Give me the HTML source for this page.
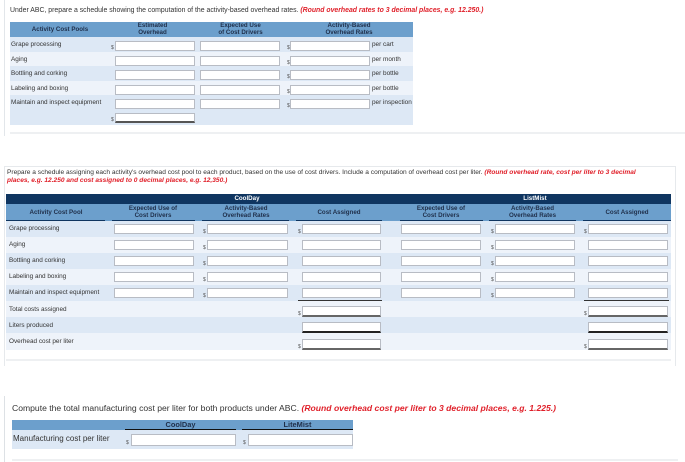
<!DOCTYPE html><html><head><style>
body{margin:0;width:685px;height:462px;background:#fff;font-family:"Liberation Sans",sans-serif;position:relative;overflow:hidden;color:#333}
div,span{position:absolute;box-sizing:border-box}
.t{font-size:6.4px;white-space:nowrap}
.r{color:#e0202a;font-style:italic;font-weight:bold}
.in{background:#fff;border:1px solid #b8bcc4;height:10px}
.hd{font-size:6.2px;font-weight:bold;color:#1f2f4a;text-align:center;line-height:6.5px}
.d{font-size:5px;color:#555}
.ul{height:1px;background:#0f3560}
</style></head><body>
<div style="left:4px;top:0;width:681px;height:136px;border-left:1px solid #e2e6ea"></div>
<div class="t" style="left:10px;top:7px;font-size:6.9px">Under ABC, prepare a schedule showing the computation of the activity-based overhead rates. <span class="r" style="position:static">(Round overhead rates to 3 decimal places, e.g. 12.250.)</span></div>
<div style="left:10px;top:22px;width:403px;height:15px;background:#6c9fcc"></div>
<div class="hd" style="left:10px;top:27px;width:100px">Activity Cost Pools</div>
<div class="hd" style="left:110px;top:23px;width:85px">Estimated<br>Overhead</div>
<div class="hd" style="left:198px;top:23px;width:85px">Expected Use<br>of Cost Drivers</div>
<div class="hd" style="left:285px;top:23px;width:128px">Activity-Based<br>Overhead Rates</div>
<div style="left:10px;top:37px;width:403px;height:15px;background:#dde8f5"></div>
<div style="left:10px;top:52px;width:403px;height:14px;background:#eef3fa"></div>
<div style="left:10px;top:66px;width:403px;height:15px;background:#dde8f5"></div>
<div style="left:10px;top:81px;width:403px;height:14px;background:#eef3fa"></div>
<div style="left:10px;top:95px;width:403px;height:30px;background:#dde8f5"></div>
<div class="t" style="left:11px;top:41px">Grape processing</div>
<div class="t" style="left:11px;top:56px">Aging</div>
<div class="t" style="left:11px;top:70px">Bottling and corking</div>
<div class="t" style="left:11px;top:85px">Labeling and boxing</div>
<div class="t" style="left:11px;top:99px">Maintain and inspect equipment</div>
<div class="d" style="left:111px;top:45px">$</div>
<div class="in" style="left:115px;top:41px;width:80px"></div>
<div class="in" style="left:115px;top:56px;width:80px"></div>
<div class="in" style="left:115px;top:70px;width:80px"></div>
<div class="in" style="left:115px;top:85px;width:80px"></div>
<div class="in" style="left:115px;top:99px;width:80px"></div>
<div class="in" style="left:200px;top:41px;width:80px"></div>
<div class="in" style="left:200px;top:56px;width:80px"></div>
<div class="in" style="left:200px;top:70px;width:80px"></div>
<div class="in" style="left:200px;top:85px;width:80px"></div>
<div class="in" style="left:200px;top:99px;width:80px"></div>
<div class="d" style="left:287px;top:45px">$</div><div class="in" style="left:290px;top:41px;width:80px"></div>
<div class="d" style="left:287px;top:60px">$</div><div class="in" style="left:290px;top:56px;width:80px"></div>
<div class="d" style="left:287px;top:74px">$</div><div class="in" style="left:290px;top:70px;width:80px"></div>
<div class="d" style="left:287px;top:89px">$</div><div class="in" style="left:290px;top:85px;width:80px"></div>
<div class="d" style="left:287px;top:103px">$</div><div class="in" style="left:290px;top:99px;width:80px"></div>
<div class="t" style="left:372px;top:41px">per cart</div>
<div class="t" style="left:372px;top:56px">per month</div>
<div class="t" style="left:372px;top:70px">per bottle</div>
<div class="t" style="left:372px;top:85px">per bottle</div>
<div class="t" style="left:372px;top:99px">per inspection</div>
<div class="d" style="left:111px;top:117px">$</div>
<div class="in" style="left:115px;top:113px;width:80px;border-bottom:2px solid #555"></div>
<div style="left:10px;top:132px;width:675px;height:2px;background:#eef0f2"></div>

<div style="left:4px;top:166px;width:672px;height:200px;border:1px solid #e6e9ec;border-bottom:none"></div>
<div class="t" style="left:7px;top:169px;line-height:8px;font-size:6.6px">Prepare a schedule assigning each activity's overhead cost pool to each product, based on the use of cost drivers. Include a computation of overhead cost per liter. <span class="r" style="position:static">(Round overhead rate, cost per liter to 3 decimal<br>places, e.g. 12.250 and cost assigned to 0 decimal places, e.g. 12,350.)</span></div>
<div style="left:6px;top:194px;width:665px;height:10px;background:#0f3560"></div>
<div class="hd" style="left:207px;top:196px;width:80px;color:#fff">CoolDay</div>
<div class="hd" style="left:495px;top:196px;width:80px;color:#fff">ListMist</div>
<div style="left:6px;top:204px;width:665px;height:17px;background:#6c9fcc"></div>
<div class="hd" style="left:6px;top:210px;width:100px">Activity Cost Pool</div>
<div class="hd" style="left:112px;top:206px;width:82px">Expected Use of<br>Cost Drivers</div>
<div class="hd" style="left:203px;top:206px;width:86px">Activity-Based<br>Overhead Rates</div>
<div class="hd" style="left:296px;top:210px;width:86px">Cost Assigned</div>
<div class="hd" style="left:400px;top:206px;width:82px">Expected Use of<br>Cost Drivers</div>
<div class="hd" style="left:489px;top:206px;width:87px">Activity-Based<br>Overhead Rates</div>
<div class="hd" style="left:583px;top:210px;width:88px">Cost Assigned</div>
<div class="ul" style="left:6px;top:220px;width:99px"></div>
<div class="ul" style="left:112px;top:220px;width:83px"></div>
<div class="ul" style="left:202px;top:220px;width:87px"></div>
<div class="ul" style="left:296px;top:220px;width:86px"></div>
<div class="ul" style="left:400px;top:220px;width:83px"></div>
<div class="ul" style="left:489px;top:220px;width:87px"></div>
<div class="ul" style="left:583px;top:220px;width:88px"></div>
<div style="left:6px;top:221px;width:665px;height:16px;background:#dde8f5"></div>
<div style="left:6px;top:237px;width:665px;height:16px;background:#eef3fa"></div>
<div style="left:6px;top:253px;width:665px;height:16px;background:#dde8f5"></div>
<div style="left:6px;top:269px;width:665px;height:16px;background:#eef3fa"></div>
<div style="left:6px;top:285px;width:665px;height:16px;background:#dde8f5"></div>
<div style="left:6px;top:301px;width:665px;height:16px;background:#eef3fa"></div>
<div style="left:6px;top:317px;width:665px;height:16px;background:#dde8f5"></div>
<div style="left:6px;top:333px;width:665px;height:17px;background:#eef3fa"></div>
<div class="t" style="left:9px;top:225px">Grape processing</div>
<div class="t" style="left:9px;top:241px">Aging</div>
<div class="t" style="left:9px;top:257px">Bottling and corking</div>
<div class="t" style="left:9px;top:273px">Labeling and boxing</div>
<div class="t" style="left:9px;top:289px">Maintain and inspect equipment</div>
<div class="t" style="left:9px;top:306px">Total costs assigned</div>
<div class="t" style="left:9px;top:322px">Liters produced</div>
<div class="t" style="left:9px;top:338px">Overhead cost per liter</div>
<div class="in" style="left:114px;top:224px;width:80px"></div><div class="in" style="left:114px;top:240px;width:80px"></div><div class="in" style="left:114px;top:256px;width:80px"></div><div class="in" style="left:114px;top:272px;width:80px"></div><div class="in" style="left:114px;top:288px;width:80px"></div>
<div class="in" style="left:207px;top:224px;width:81px"></div><div class="in" style="left:207px;top:240px;width:81px"></div><div class="in" style="left:207px;top:256px;width:81px"></div><div class="in" style="left:207px;top:272px;width:81px"></div><div class="in" style="left:207px;top:288px;width:81px"></div>
<div class="in" style="left:302px;top:224px;width:79px"></div><div class="in" style="left:302px;top:240px;width:79px"></div><div class="in" style="left:302px;top:256px;width:79px"></div><div class="in" style="left:302px;top:272px;width:79px"></div><div class="in" style="left:302px;top:288px;width:79px"></div>
<div class="in" style="left:401px;top:224px;width:80px"></div><div class="in" style="left:401px;top:240px;width:80px"></div><div class="in" style="left:401px;top:256px;width:80px"></div><div class="in" style="left:401px;top:272px;width:80px"></div><div class="in" style="left:401px;top:288px;width:80px"></div>
<div class="in" style="left:495px;top:224px;width:80px"></div><div class="in" style="left:495px;top:240px;width:80px"></div><div class="in" style="left:495px;top:256px;width:80px"></div><div class="in" style="left:495px;top:272px;width:80px"></div><div class="in" style="left:495px;top:288px;width:80px"></div>
<div class="in" style="left:588px;top:224px;width:80px"></div><div class="in" style="left:588px;top:240px;width:80px"></div><div class="in" style="left:588px;top:256px;width:80px"></div><div class="in" style="left:588px;top:272px;width:80px"></div><div class="in" style="left:588px;top:288px;width:80px"></div>
<div class="d" style="left:203px;top:229px">$</div><div class="d" style="left:203px;top:245px">$</div><div class="d" style="left:203px;top:261px">$</div><div class="d" style="left:203px;top:277px">$</div><div class="d" style="left:203px;top:293px">$</div>
<div class="d" style="left:491px;top:229px">$</div><div class="d" style="left:491px;top:245px">$</div><div class="d" style="left:491px;top:261px">$</div><div class="d" style="left:491px;top:277px">$</div><div class="d" style="left:491px;top:293px">$</div>
<div class="d" style="left:298px;top:229px">$</div><div class="d" style="left:584px;top:229px">$</div>
<div style="left:298px;top:300px;width:84px;height:1px;background:#333"></div>
<div style="left:584px;top:300px;width:85px;height:1px;background:#333"></div>
<div class="d" style="left:298px;top:311px">$</div><div class="in" style="left:302px;top:306px;width:79px;height:11px;border-bottom:2px solid #666"></div>
<div class="in" style="left:302px;top:322px;width:79px;height:11px;border-bottom:2px solid #222"></div>
<div class="d" style="left:298px;top:344px">$</div><div class="in" style="left:302px;top:339px;width:79px;height:11px;border-bottom:2px solid #666"></div>
<div class="d" style="left:584px;top:311px">$</div><div class="in" style="left:588px;top:306px;width:80px;height:11px;border-bottom:2px solid #666"></div>
<div class="in" style="left:588px;top:322px;width:80px;height:11px;border-bottom:2px solid #222"></div>
<div class="d" style="left:584px;top:344px">$</div><div class="in" style="left:588px;top:339px;width:80px;height:11px;border-bottom:2px solid #666"></div>
<div style="left:6px;top:359px;width:665px;height:2px;background:#eef0f2"></div>

<div style="left:4px;top:396px;width:1px;height:66px;background:#dde1e5"></div>
<div style="left:12px;top:403px;font-size:8.6px;white-space:nowrap">Compute the total manufacturing cost per liter for both products under ABC. <span class="r" style="position:static">(Round overhead cost per liter to 3 decimal places, e.g. 1.225.)</span></div>
<div style="left:12px;top:420px;width:341px;height:10px;background:#6c9fcc"></div>
<div class="hd" style="left:125px;top:421px;width:111px;font-size:7.4px;line-height:8px">CoolDay</div>
<div class="hd" style="left:242px;top:421px;width:111px;font-size:7.4px;line-height:8px">LiteMist</div>
<div style="left:125px;top:429px;width:111px;height:1px;background:#111"></div>
<div style="left:242px;top:429px;width:111px;height:1px;background:#111"></div>
<div style="left:12px;top:430px;width:341px;height:19px;background:#dde8f5"></div>
<div style="left:13px;top:434px;font-size:8px;white-space:nowrap">Manufacturing cost per liter</div>
<div class="d" style="left:126px;top:440px">$</div><div class="in" style="left:131px;top:434px;width:105px;height:12px"></div>
<div class="d" style="left:243px;top:440px">$</div><div class="in" style="left:248px;top:434px;width:105px;height:12px"></div>
<div style="left:12px;top:459px;width:666px;height:2px;background:#eef0f2"></div>
</body></html>
